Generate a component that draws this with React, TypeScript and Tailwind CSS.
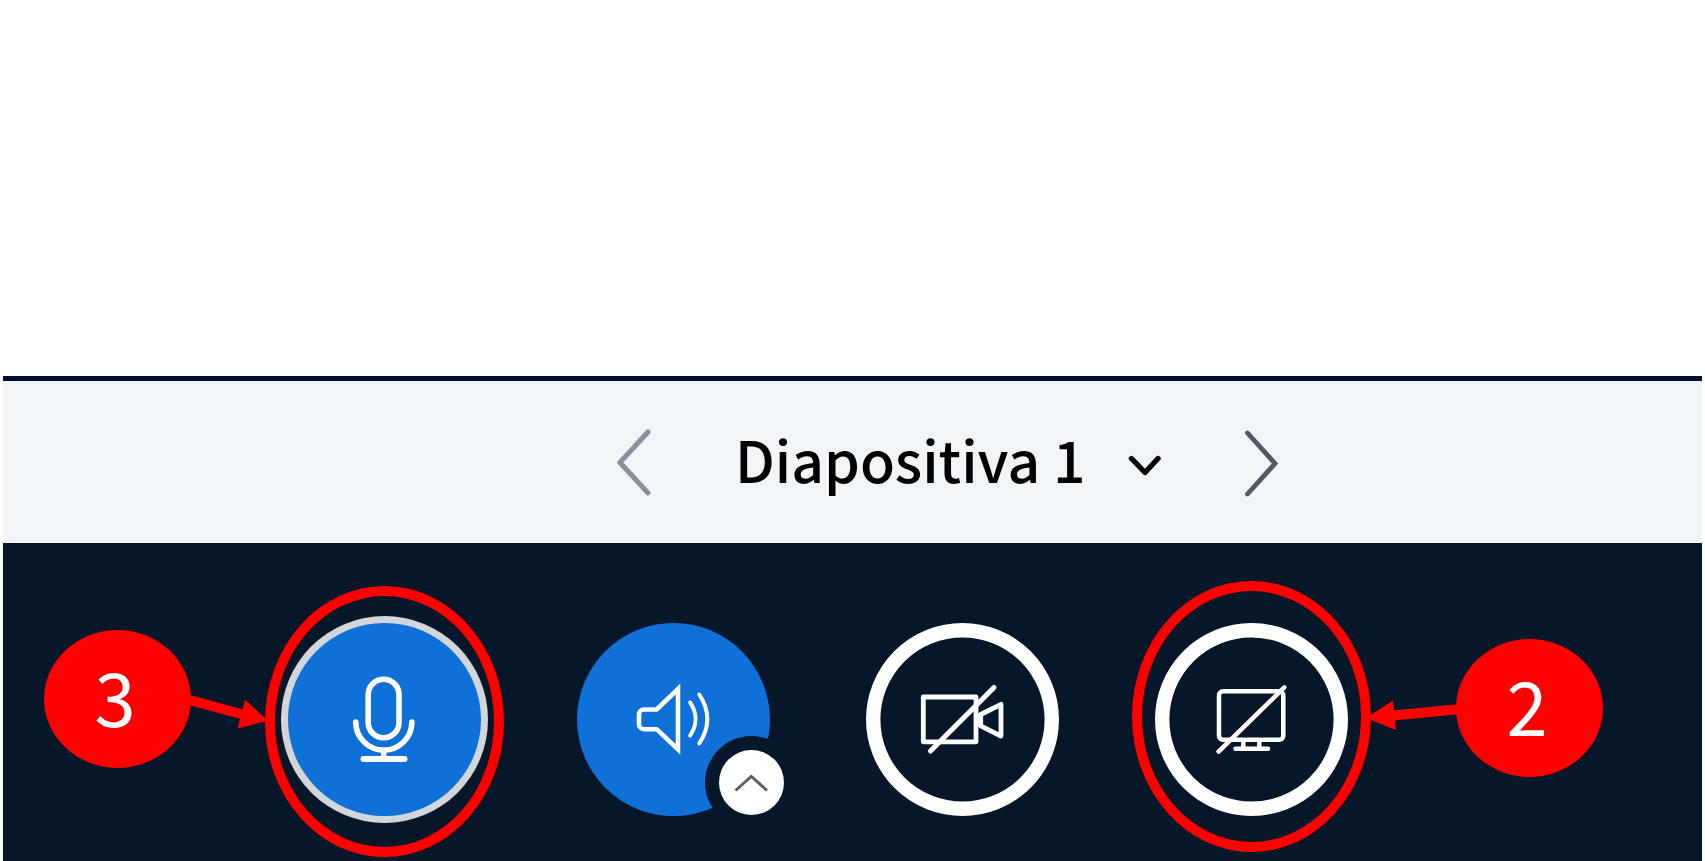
import { useState } from "react";
import type { ReactNode } from "react";

const slides = ["Diapositiva 1"];

function Icon({ children, width }: { children: ReactNode; width: number }) {
  return (
    <svg
      viewBox="0 0 193 193"
      className="absolute inset-0 size-full"
      fill="none"
      stroke="white"
      strokeWidth={width}
      aria-hidden="true"
    >
      {children}
    </svg>
  );
}

function SlideBar() {
  const [slide, setSlide] = useState(slides[0]);
  return (
    <nav
      aria-label="Diapositivas"
      className="flex h-[167px] items-center justify-center border-t-5 border-[#01102a] bg-[#f1f5f8] pt-[2px] pl-[191px]"
    >
      <button type="button" aria-label="Diapositiva anterior" className="shrink-0">
        <svg width="34" height="68" viewBox="0 0 34 68" fill="none" stroke="#8a919d" strokeWidth="5" strokeLinecap="round">
          <path d="M31 3 3 33.5 31 64" />
        </svg>
      </button>
      <div className="relative mr-[84px] ml-[84px]">
        <select
          aria-label="Seleccionar diapositiva"
          value={slide}
          onChange={(e) => setSlide(e.target.value)}
          className="block h-[96px] w-[426px] appearance-none bg-transparent pb-2 font-['Noto_Sans_CJK_SC','Noto_Sans',sans-serif] text-[57px] font-medium text-black"
        >
          {slides.map((s) => (
            <option key={s}>{s}</option>
          ))}
        </select>
        <svg
          className="pointer-events-none absolute top-[40px] right-0"
          width="34"
          height="22"
          viewBox="0 0 34 22"
          fill="none"
          stroke="black"
          strokeWidth="5.4"
          strokeLinecap="round"
          strokeLinejoin="round"
          aria-hidden="true"
        >
          <path d="M4.5 3.5 18 17.5 31 3.5" />
        </svg>
      </div>
      <button type="button" aria-label="Diapositiva siguiente" className="shrink-0">
        <svg width="34" height="68" viewBox="0 0 34 68" fill="none" stroke="#4e5a67" strokeWidth="4.8" strokeLinecap="round">
          <path d="M2.5 4 30 34.5 2.5 65" />
        </svg>
      </button>
    </nav>
  );
}

function Badge({ label, className }: { label: string; className: string }) {
  return (
    <span
      className={`pointer-events-none absolute flex h-[138px] w-[147px] items-center justify-center rounded-[50%] bg-[#ff0000] pr-1 pb-2 font-['Noto_Sans_CJK_SC','Noto_Sans',sans-serif] text-[74px] leading-none text-white ${className}`}
    >
      {label}
    </span>
  );
}

function MicControl() {
  return (
    <div className="relative size-[193px]">
      <button
        type="button"
        aria-label="Silenciar micrófono"
        className="relative size-full rounded-full bg-[#0f70d7] ring-7 ring-[#d2d5da]"
      >
        <Icon width={5.6}>
          <rect x="80.2" y="56.2" width="30.8" height="58.6" rx="15.4" />
          <path strokeLinecap="round" d="M67.7 99a28.1 28.1 0 0 0 56.2 0M95.7 128v8" />
          <path strokeWidth="6" strokeLinecap="round" d="M75.5 136h41" />
        </Icon>
      </button>
      <span className="pointer-events-none absolute -top-[37px] -left-[23px] h-[271px] w-[239px] rounded-[50%] border-10 border-[#ff0000]" />
      <svg className="pointer-events-none absolute top-[67px] -left-[100px]" width="80" height="44" viewBox="188 690 80 44" aria-hidden="true">
        <path d="M188 699.5 243 714.5" stroke="#ff0000" strokeWidth="10" />
        <path d="M245 699.5 237.5 728.5 268 720.7z" fill="#ff0000" />
      </svg>
      <Badge label="3" className="top-[7px] -left-[244px]" />
    </div>
  );
}

function AudioControl() {
  return (
    <div className="relative size-[193px]">
      <button type="button" aria-label="Audio" className="relative size-full rounded-full bg-[#0f70d7]">
        <Icon width={4.6}>
          <path d="M101 66 79.7 86.5H67a5 5 0 0 0-5 5v9.7a5 5 0 0 0 5 5h12.700L101 126.500z" />
          <path strokeLinecap="round" strokeWidth="4" d="M113.200 79.500c7 10.500 7 22.500 0 33M122.300 71.500c10.500 16 10.500 33 0 49" />
        </Icon>
      </button>
      <button
        type="button"
        aria-label="Cambiar dispositivo de audio"
        className="absolute top-[127px] left-[142px] flex size-[65px] items-center justify-center rounded-full bg-white ring-14 ring-[#051728]"
      >
        <svg width="36" height="20" viewBox="0 0 36 20" fill="none" stroke="#56616d" strokeWidth="3" aria-hidden="true">
          <path d="M2.500 17.500 18.300 3.500 34 17.500" />
        </svg>
      </button>
    </div>
  );
}

function CameraControl() {
  return (
    <button type="button" aria-label="Compartir cámara" className="relative size-[193px] rounded-full">
      <Icon width={4.8}>
        <circle cx="96.5" cy="96.5" r="89.3" strokeWidth="14.4" />
        <path strokeLinejoin="round" d="M57.300 74H110v44.800H57.300zM114.700 91.500 135 81.300v31.800l-20.300-10.300z" />
        <path strokeLinecap="round" strokeWidth="5" d="M128 64.500 64.500 128" />
      </Icon>
    </button>
  );
}

function ScreenControl() {
  return (
    <div className="relative size-[193px]">
      <button type="button" aria-label="Compartir pantalla" className="relative size-full rounded-full">
        <Icon width={4.5}>
          <circle cx="96.5" cy="96.5" r="89.3" strokeWidth="14.4" />
          <rect x="64" y="68.3" width="64.3" height="48.5" rx="4" />
          <path d="M88.300 117.500v8M104.300 117.500v8" />
          <path strokeLinecap="round" d="M80.500 125.800h32.500M129.300 64.300 63.600 128.600" />
        </Icon>
      </button>
      <span className="pointer-events-none absolute -top-[42px] -left-[23px] h-[271px] w-[239px] rounded-[50%] border-10 border-[#ff0000]" />
      <svg className="pointer-events-none absolute top-[73px] left-[210px]" width="94" height="40" viewBox="1366 695 94 40" aria-hidden="true">
        <path d="M1459 708.3 1394 714.5" stroke="#ff0000" strokeWidth="10" />
        <path d="M1394 699.5 1397 729 1367 717z" fill="#ff0000" />
      </svg>
      <Badge label="2" className="top-[16px] left-[301px]" />
    </div>
  );
}

export default function App() {
  return (
    <div className="flex min-h-screen flex-col overflow-hidden bg-white px-[3px]">
      <main className="flex-1" />
      <SlideBar />
      <footer className="flex justify-center gap-24 bg-[#051728] pt-20 pr-[70px] pb-[45px]">
        <MicControl />
        <AudioControl />
        <CameraControl />
        <ScreenControl />
      </footer>
    </div>
  );
}
